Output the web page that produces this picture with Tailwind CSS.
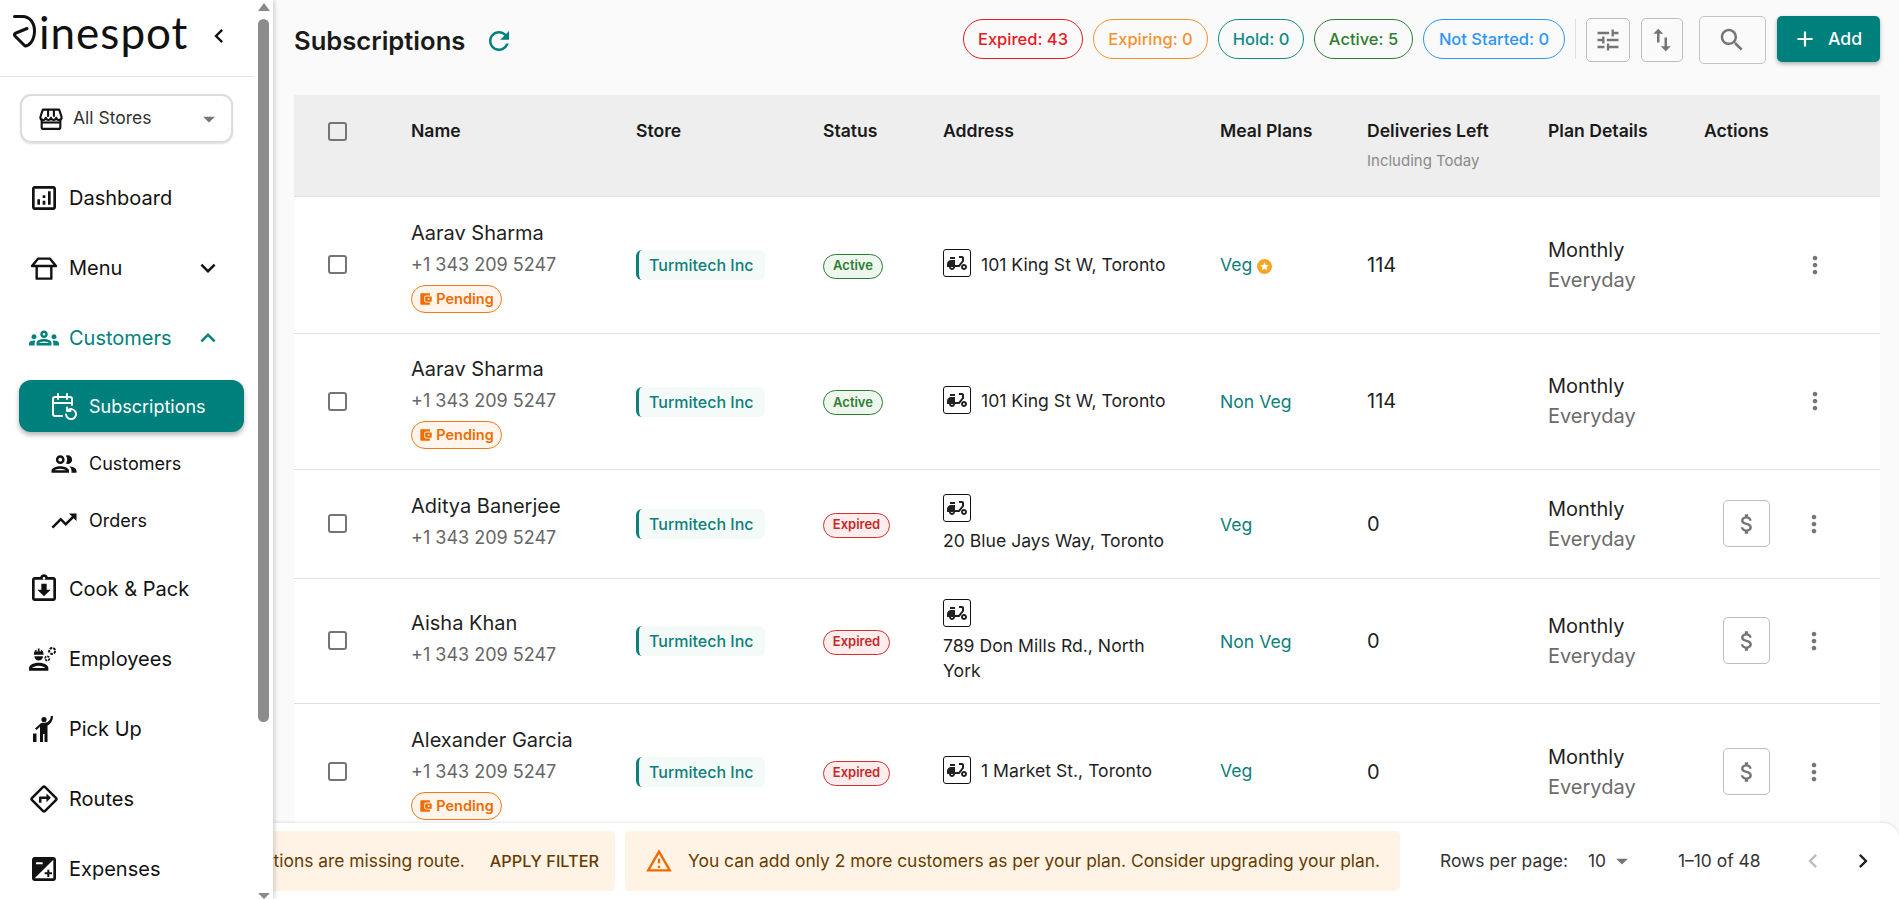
<!DOCTYPE html>
<html lang="en">
<head>
    <meta charset="UTF-8">
    <title>Subscriptions</title>
    <script src="https://cdn.jsdelivr.net/npm/@tailwindcss/browser@4"></script>
</head>
<body class="bg-[#fafafa] font-['Inter',sans-serif] text-[#1a1a1a] overflow-hidden">
    <!-- shared icons -->
    <svg class="hidden">
        <symbol id="moped" viewBox="0 0 24 24"><path d="M19 7c0-1.1-.9-2-2-2h-3v2h3v2.65L13.52 14H10V9H6c-2.21 0-4 1.79-4 4v3h2c0 1.66 1.34 3 3 3s3-1.34 3-3h4.48L19 10.35V7zM7 17c-.55 0-1-.45-1-1h2c0 .55-.45 1-1 1z"/><path d="M5 6h5v2H5zm14 7c-1.66 0-3 1.34-3 3s1.34 3 3 3 3-1.34 3-3-1.34-3-3-3zm0 4c-.55 0-1-.45-1-1s.45-1 1-1 1 .45 1 1-.45 1-1 1z"/></symbol>
        <symbol id="kebab" viewBox="0 0 24 24"><path d="M12 8c1.1 0 2-.9 2-2s-.9-2-2-2-2 .9-2 2 .9 2 2 2zm0 2c-1.1 0-2 .9-2 2s.9 2 2 2 2-.9 2-2-.9-2-2-2zm0 6c-1.1 0-2 .9-2 2s.9 2 2 2 2-.9 2-2-.9-2-2-2z"/></symbol>
        <symbol id="dollar" viewBox="0 0 24 24"><path d="M11.8 10.9c-2.27-.59-3-1.2-3-2.15 0-1.09 1.01-1.85 2.7-1.85 1.78 0 2.44.85 2.5 2.1h2.21c-.07-1.72-1.12-3.3-3.21-3.81V3h-3v2.16c-1.94.42-3.5 1.68-3.5 3.61 0 2.31 1.91 3.46 4.7 4.13 2.5.6 3 1.48 3 2.41 0 .69-.49 1.79-2.7 1.79-2.06 0-2.87-.92-2.98-2.1h-2.2c.12 2.19 1.76 3.42 3.68 3.83V21h3v-2.15c1.95-.37 3.5-1.5 3.5-3.55 0-2.84-2.43-3.81-4.7-4.4z"/></symbol>
        <symbol id="wallet" viewBox="0 0 16 16"><path fill-rule="evenodd" d="M2.5 1.5h10v2.5H8a2 2 0 0 0-2 2v4a2 2 0 0 0 2 2h4.500v2.500h-10a1 1 0 0 1-1-1v-11a1 1 0 0 1 1-1zM8.500 5h6v6h-6a1.500 1.500 0 0 1-1.500-1.500v-3A1.500 1.500 0 0 1 8.500 5zm1.500 2v2h2V7z"/></symbol>
    </svg>

    <div class="flex h-screen">
        <!-- Sidebar -->
        <aside class="relative z-10 w-[273px] shrink-0 h-full bg-white overflow-hidden shadow-[1px_0_5px_rgba(0,0,0,0.22)]">
            <div class="flex items-start h-[77px] w-[254px] border-b border-[#e4e4e4] pl-[13px] pt-[15px]">
                <svg class="w-[23px] h-[33px] shrink-0" viewBox="0 0 23 33" fill="none" stroke="#111" stroke-width="3" stroke-linejoin="round" stroke-linecap="round"><path d="M1.500 1.500H9.500C17 1.500 21.500 8 21.500 16C21.500 25 16.500 31 12 31L2 21C1 20 1.500 18.500 3 18L14 13.500"/></svg>
                <span class="ml-[3px] -mt-[5px] font-['Lato'] text-[44px] leading-none text-[#111] tracking-[1px]">inespot</span>
                <svg class="w-[28px] h-[28px] ml-[17px] mt-[7px] shrink-0" viewBox="0 0 24 24" fill="#111"><path d="M15.410 7.410 14 6l-6 6 6 6 1.410-1.410L10.830 12z"/></svg>
            </div>

            <div class="mx-[20px] mt-[17px] w-[213px] h-[49px] border-2 border-[#dcdcdc] rounded-[11px] shadow-[0_1px_2px_rgba(0,0,0,0.12)] flex items-center pl-[15px] pr-[8px]">
                <svg class="w-[28px] h-[28px] shrink-0" viewBox="0 0 24 24" fill="none" stroke="#111" stroke-width="1.800" stroke-linejoin="round"><path d="M4 12v7a1.500 1.500 0 0 0 1.500 1.500h13A1.500 1.500 0 0 0 20 19v-7"/><path d="M5 4h14l2 6a2.200 2.200 0 0 1-4.500 1 2.300 2.300 0 0 1-4.500 0 2.300 2.300 0 0 1-4.500 0A2.200 2.200 0 0 1 3 10zM9.500 4v6M14.500 4v6"/><path d="M4 15h16"/></svg>
                <span class="ml-[8px] text-[17.500px] text-[#333]">All Stores</span>
                <svg class="w-[28px] h-[28px] ml-auto text-[#757575]" viewBox="0 0 24 24" fill="currentColor"><path d="m7 10 5 5 5-5z"/></svg>
            </div>

            <nav class="mt-[20px] pl-[28px] pr-[50px] text-[20px] text-[#111]">
                <a class="flex items-center h-[70px] gap-[9px]">
                    <svg class="w-[32px] h-[32px] shrink-0" viewBox="0 0 24 24" fill="#111"><path d="M19 3H5c-1.100 0-2 .9-2 2v14c0 1.100.9 2 2 2h14c1.100 0 2-.9 2-2V5c0-1.100-.9-2-2-2zm0 16H5V5h14v14z"/><path d="M7 13h2v4H7zm8-6h2v10h-2zm-4 7h2v3h-2zm0-4h2v2h-2z"/></svg>
                    <span>Dashboard</span>
                </a>
                <a class="flex items-center h-[70px] gap-[9px]">
                    <svg class="w-[32px] h-[32px] shrink-0" viewBox="0 0 24 24" fill="none" stroke="#111" stroke-width="1.800" stroke-linejoin="round"><path d="M3 10.500 7.500 5h9l4.500 5.500z"/><path d="M6.500 10.500V20h11v-9.500"/></svg>
                    <span>Menu</span>
                    <svg class="w-[30px] h-[30px] ml-auto" viewBox="0 0 24 24" fill="#111"><path d="M16.590 8.590 12 13.170 7.410 8.590 6 10l6 6 6-6z"/></svg>
                </a>
                <a class="flex items-center h-[70px] gap-[9px] text-[#00807d]">
                    <svg class="w-[30px] h-[30px] shrink-0 ml-[1px] mr-[1px]" viewBox="0 0 24 24" fill="#00807d"><path d="M4,13c1.100,0,2-0.900,2-2c0-1.100-0.900-2-2-2s-2,0.900-2,2C2,12.100,2.900,13,4,13z M5.130,14.100C4.760,14.040,4.390,14,4,14 c-0.990,0-1.930,0.210-2.780,0.580C0.480,14.900,0,15.620,0,16.430V18l4.500,0v-1.610C4.500,15.560,4.730,14.780,5.130,14.100z M20,13c1.100,0,2-0.900,2-2 c0-1.100-0.900-2-2-2s-2,0.900-2,2C18,12.100,18.900,13,20,13z M24,16.430c0-0.810-0.480-1.530-1.220-1.850C21.930,14.210,20.990,14,20,14 c-0.390,0-0.760,0.040-1.130,0.100c0.400,0.680,0.630,1.460,0.630,2.290V18l4.500,0V16.430z M16.240,13.650c-1.170-0.520-2.610-0.900-4.240-0.900 c-1.630,0-3.070,0.390-4.240,0.900C6.680,14.130,6,15.210,6,16.390V18h12v-1.610C18,15.210,17.320,14.130,16.240,13.650z M8.010,16c0.090-0.230,0.130-0.390,0.910-0.690 c0.970-0.380,1.990-0.560,3.080-0.560s2.110,0.180,3.080,0.560c0.770,0.300,0.810,0.460,0.910,0.690H8.010z M12,12c1.660,0,3-1.340,3-3 c0-1.660-1.340-3-3-3S9,7.340,9,9C9,10.660,10.340,12,12,12z M12,8c0.550,0,1,0.450,1,1s-0.450,1-1,1s-1-0.450-1-1S11.450,8,12,8z"/></svg>
                    <span>Customers</span>
                    <svg class="w-[30px] h-[30px] ml-auto" viewBox="0 0 24 24" fill="#00807d"><path d="m12 8-6 6 1.410 1.410L12 10.830l4.590 4.580L18 14z"/></svg>
                </a>
            </nav>

            <div class="ml-[19px] mt-[7px] w-[225px] h-[52px] rounded-[12px] bg-[#00807d] shadow-[0_3px_5px_rgba(0,0,0,0.3)] flex items-center pl-[31px] gap-[11px] text-white text-[18px]">
                <svg class="w-[28px] h-[28px] shrink-0" viewBox="0 0 28 28" fill="none" stroke="#fff" stroke-width="2" stroke-linecap="round" stroke-linejoin="round"><path d="M12 24H5a2 2 0 0 1-2-2V7a2 2 0 0 1 2-2h15a2 2 0 0 1 2 2v6M3 11h19M8 2v5M17 2v5"/><path d="M16 22.500a5 5 0 1 0 1.500-4"/><path d="M17 15.500v3.500h3.500"/></svg>
                <span>Subscriptions</span>
            </div>

            <div class="pl-[49px] text-[18px] text-[#111]">
                <a class="flex items-center h-[57px] mt-[3px] gap-[10px]">
                    <svg class="w-[30px] h-[30px] shrink-0" viewBox="0 0 24 24" fill="#111"><path d="M9 13.750c-2.340 0-7 1.170-7 3.500V19h14v-1.750c0-2.330-4.660-3.500-7-3.500zM4.340 17c.84-.58 2.870-1.250 4.660-1.250s3.820.67 4.660 1.250H4.340zM9 12c1.930 0 3.500-1.570 3.500-3.500S10.930 5 9 5 5.500 6.570 5.500 8.500 7.070 12 9 12zm0-5c.83 0 1.500.67 1.500 1.500S9.830 10 9 10s-1.500-.67-1.500-1.500S8.170 7 9 7zm7.040 6.810c1.160.84 1.960 1.960 1.960 3.440V19h4v-1.750c0-2.020-3.500-3.170-5.960-3.440zM15 12c1.930 0 3.500-1.570 3.500-3.500S16.930 5 15 5c-.54 0-1.040.13-1.500.35.63.89 1 1.980 1 3.150s-.37 2.260-1 3.150c.46.22.96.35 1.500.35z"/></svg>
                    <span>Customers</span>
                </a>
                <a class="flex items-center h-[57px] gap-[10px]">
                    <svg class="w-[30px] h-[30px] shrink-0" viewBox="0 0 24 24" fill="#111"><path d="m16 6 2.290 2.290-4.880 4.880-4-4L2 16.590 3.410 18l6-6 4 4 6.300-6.290L22 12V6z"/></svg>
                    <span>Orders</span>
                </a>
            </div>

            <nav class="pl-[28px] text-[20px] text-[#111] mt-[5px]">
                <a class="flex items-center h-[70px] gap-[9px]">
                    <svg class="w-[32px] h-[32px] shrink-0" viewBox="0 0 24 24" fill="#111"><path d="M19 3h-4.180C14.400 1.840 13.300 1 12 1c-1.300 0-2.400.84-2.820 2H5c-1.100 0-2 .9-2 2v14c0 1.100.9 2 2 2h14c1.100 0 2-.9 2-2V5c0-1.100-.9-2-2-2zm-7 0c.55 0 1 .45 1 1s-.45 1-1 1-1-.45-1-1 .45-1 1-1zm7 16H5V5h14v14zm-7-1.500 5-5h-3V8h-4v4.500H7z"/></svg>
                    <span>Cook &amp; Pack</span>
                </a>
                <a class="flex items-center h-[70px] gap-[9px]">
                    <svg class="w-[30px] h-[30px] shrink-0 mr-[2px]" viewBox="0 0 28 28" fill="#111"><path d="M10 17.500c-3.500 0-9 1.600-9 4.800V25h18v-2.700c0-3.200-5.500-4.800-9-4.800zm-6.300 5c.9-1.300 3.900-2.300 6.300-2.300s5.400 1 6.300 2.300H3.700z"/><path d="M5.500 9.500V10h9v-.5c0-2-1-3.700-2.500-4.400V7h-1.200V4.300h-1.600V7H8V5.100C6.500 5.800 5.500 7.500 5.500 9.500zM6 11.500a4 4 0 0 0 8 0z"/><circle cx="22.500" cy="6.500" r="2.800" fill="none" stroke="#111" stroke-width="1.800" stroke-dasharray="2.500 1"/><circle cx="18" cy="13.500" r="2" fill="none" stroke="#111" stroke-width="1.600" stroke-dasharray="2 .8"/></svg>
                    <span>Employees</span>
                </a>
                <a class="flex items-center h-[70px] gap-[9px]">
                    <svg class="w-[28px] h-[28px] shrink-0 mx-[2px]" viewBox="0 0 28 28" fill="#111"><circle cx="14" cy="4.500" r="2.600"/><path d="M23 1h-2.200c0 4-2.500 6.400-6 6.800h-2.300c-1.300 0-2 .8-2.400 1.200L5 13.500l1.500 1.600 3.500-3.300V27h3v-8h1.500v8h3V10.500c2.800-1.300 5.500-4.500 5.500-9.500z"/><path d="M3 18.500h3.500V27H3z"/></svg>
                    <span>Pick Up</span>
                </a>
                <a class="flex items-center h-[70px] gap-[9px]">
                    <svg class="w-[30px] h-[30px] shrink-0 ml-[1px] mr-[1px]" viewBox="0 0 24 24" fill="#111"><path d="m22.430 10.590-9.010-9.010c-.75-.75-2.070-.76-2.830 0l-9 9c-.78.78-.78 2.040 0 2.820l9 9c.39.39.9.58 1.410.58.51 0 1.020-.19 1.410-.58l8.990-8.990c.79-.76.8-2.020.03-2.820zm-10.420 10.400-9-9 9-9 9 9-9 9zM8 11v4h2v-3h4v2.500l3.500-3.500L14 7.500V10H9c-.55 0-1 .45-1 1z"/></svg>
                    <span>Routes</span>
                </a>
                <a class="flex items-center h-[70px] gap-[9px]">
                    <svg class="w-[32px] h-[32px] shrink-0" viewBox="0 0 24 24" fill="#111"><path d="M19 3H5c-1.100 0-2 .9-2 2v14c0 1.100.9 2 2 2h14c1.100 0 2-.9 2-2V5c0-1.100-.9-2-2-2zM6 7h5v1.500H6V7zm13 12H5L19 5v14zm-4.500-3v2H16v-2h2v-1.500h-2v-2h-1.500v2h-2V16h2z"/></svg>
                    <span>Expenses</span>
                </a>
            </nav>

            <!-- scrollbar -->
            <div class="absolute top-0 right-[4px] bottom-0 w-[11px]">
                <div class="absolute top-[3px] left-0 w-0 h-0 border-x-[6px] border-x-transparent border-b-[8px] border-b-[#8a8a8a]"></div>
                <div class="absolute top-[19px] left-0 w-[11px] h-[703px] rounded-full bg-[#8c8c8c]"></div>
                <div class="absolute bottom-0 left-0 w-0 h-0 border-x-[6px] border-x-transparent border-t-[6px] border-t-[#8a8a8a]"></div>
            </div>
        </aside>

        <!-- Main -->
        <main class="relative flex-1 min-w-0 h-full overflow-hidden pl-[21px] pr-[19px]">
            <header class="flex items-center h-[80px] mb-[15px]">
                <h1 class="text-[25.600px] mt-[2px] font-semibold text-[#1a1a1a]">Subscriptions</h1>
                <svg class="w-[30px] h-[30px] ml-[19px] mt-[1px]" viewBox="0 0 24 24" fill="#00807d"><path d="M17.650 6.350C16.200 4.900 14.210 4 12 4c-4.420 0-7.990 3.580-7.990 8s3.570 8 7.990 8c3.730 0 6.840-2.550 7.730-6h-2.080c-.82 2.330-3.040 4-5.650 4-3.310 0-6-2.690-6-6s2.690-6 6-6c1.660 0 3.140.69 4.220 1.780L13 11h7V4l-2.350 2.350z"/></svg>
                <div class="ml-auto flex items-center text-[16.500px] font-medium">
                    <div class="flex items-center gap-[10px] -mt-[2px]">
                        <span class="flex items-center justify-center w-[120px] h-[40px] rounded-full border border-[#e31b23] text-[#e31b23]">Expired: 43</span>
                        <span class="flex items-center justify-center w-[115px] h-[40px] rounded-full border border-[#f5922f] text-[#f5922f]">Expiring: 0</span>
                        <span class="flex items-center justify-center w-[86px] h-[40px] rounded-full border border-[#0e8a87] text-[#0e8a87]">Hold: 0</span>
                        <span class="flex items-center justify-center w-[99px] h-[40px] rounded-full border border-[#2e7d32] text-[#2e7d32]">Active: 5</span>
                        <span class="flex items-center justify-center w-[142px] h-[40px] rounded-full border border-[#2e96f3] text-[#2e96f3]">Not Started: 0</span>
                    </div>
                    <div class="w-px h-[40px] bg-[#e0e0e0] ml-[10px] mr-[10px] -mt-[2px]"></div>
                    <button class="w-[44px] h-[44px] border border-[#bdbdbd] rounded-[5px] flex items-center justify-center">
                        <svg class="w-[28px] h-[28px]" viewBox="0 0 24 24" fill="#757575"><path d="M3 17v2h6v-2H3zM3 5v2h10V5H3zm10 16v-2h8v-2h-8v-2h-2v6h2zM7 9v2H3v2h4v2h2V9H7zm14 4v-2H11v2h10zm-6-4h2V7h4V5h-4V3h-2v6z"/></svg>
                    </button>
                    <button class="w-[42px] h-[44px] border border-[#bdbdbd] rounded-[5px] flex items-center justify-center ml-[11px]">
                        <svg class="w-[30px] h-[30px]" viewBox="0 0 24 24" fill="#757575"><path d="M16 17.010V10h-2v7.010h-3L15 21l4-3.990h-3zM9 3 5 6.990h3V14h2V6.990h3L9 3z"/></svg>
                    </button>
                    <button class="w-[67px] h-[48px] border border-[#c4c4c4] rounded-[5px] flex items-center justify-center ml-[16px]">
                        <svg class="w-[30px] h-[30px] -ml-[2px]" viewBox="0 0 24 24" fill="#757575"><path d="M15.500 14h-.79l-.28-.27C15.410 12.590 16 11.110 16 9.500 16 5.910 13.090 3 9.500 3S3 5.910 3 9.500 5.910 16 9.500 16c1.610 0 3.090-.59 4.230-1.570l.27.28v.79l5 4.990L20.490 19l-4.990-5zm-6 0C7.010 14 5 11.990 5 9.500S7.010 5 9.500 5 14 7.010 14 9.500 11.990 14 9.500 14z"/></svg>
                    </button>
                    <button class="w-[103px] h-[46px] -mt-[2px] bg-[#00807d] rounded-[5px] shadow-[0_2px_4px_rgba(0,0,0,0.3)] flex items-center justify-center gap-[10px] ml-[11px] text-white text-[17.600px]">
                        <svg class="w-[26px] h-[26px] -ml-[3px]" viewBox="0 0 24 24" fill="#fff"><path d="M19 13h-6v6h-2v-6H5v-2h6V5h2v6h6v2z"/></svg>
                        <span>Add</span>
                    </button>
                </div>
            </header>

            <table class="w-[1586px] table-fixed border-collapse bg-white text-left">
                <colgroup>
                    <col class="w-[117px]"><col class="w-[225px]"><col class="w-[187px]"><col class="w-[120px]"><col class="w-[277px]"><col class="w-[147px]"><col class="w-[181px]"><col class="w-[156px]"><col class="w-[176px]">
                </colgroup>
                <thead>
                    <tr class="h-[101px] bg-[#eeeeee] border-b border-[#e0e0e0] align-top text-[17.600px] font-semibold text-[#1a1a1a]">
                        <th class="pl-[34px] pt-[27px]"><div class="w-[19px] h-[19px] border-2 border-[#757575] rounded-[3px]"></div></th>
                        <th class="pt-[23px] font-semibold">Name</th>
                        <th class="pt-[23px] font-semibold">Store</th>
                        <th class="pt-[23px] font-semibold">Status</th>
                        <th class="pt-[23px] font-semibold">Address</th>
                        <th class="pt-[23px] font-semibold">Meal Plans</th>
                        <th class="pt-[23px] font-semibold">Deliveries Left<div class="mt-[6px] text-[15px] font-normal text-[#8a8a8a]">Including Today</div></th>
                        <th class="pt-[23px] font-semibold">Plan Details</th>
                        <th class="pt-[23px] font-semibold">Actions</th>
                    </tr>
                </thead>
                <tbody class="text-[#1f1f1f]">
                    <tr class="h-[137px] border-b border-[#e0e0e0]">
                        <td class="pl-[34px]"><div class="w-[19px] h-[19px] border-2 border-[#757575] rounded-[3px]"></div></td>
                        <td>
                            <div class="text-[20px] leading-[32px]">Aarav Sharma</div>
                            <div class="text-[18px] leading-[32px] text-[#666]">+1 343 209 5247</div>
                            <div class="mt-[4px] inline-flex items-center justify-center gap-[3px] h-[28px] w-[91px] rounded-full border border-[#f07a1a] bg-[#fff5ec] text-[#ef6c00] text-[14.500px] font-semibold"><svg class="w-[14px] h-[14px] fill-[#ef6c00]"><use href="#wallet"/></svg>Pending</div>
                        </td>
                        <td class="pt-[1px]"><span class="inline-flex items-center h-[30px] w-[129px] pl-[10px] rounded-[6px] border-l-[3px] border-[#0e7f7b] bg-[#f3faf8] text-[#0e7f7b] text-[16px] font-medium">Turmitech Inc</span></td>
                        <td class="pt-[2px]"><span class="inline-flex items-center justify-center h-[25px] w-[60px] rounded-full border border-[#2e7d32] bg-[#edf7ed] text-[#2e7d32] text-[13px] font-semibold">Active</span></td>
                        <td>
                            <div class="flex items-center gap-[10px] text-[17.600px]">
                                <span class="w-[28px] h-[28px] -mt-[2px] border border-[#111] rounded-[3px] flex items-center justify-center shrink-0"><svg class="w-[24px] h-[24px] fill-[#222]"><use href="#moped"/></svg></span>
                                <span class="mt-[1px]">101 King St W, Toronto</span>
                            </div>
                        </td>
                        <td class="pt-[2px] text-[#0e7f7b] text-[17.600px]"><span class="inline-flex items-center gap-[5px]">Veg<svg class="w-[15px] h-[15px] mt-[3px]" viewBox="0 0 16 16"><circle cx="8" cy="8" r="8" fill="#f5a623"/><path d="M8 3.500l1.300 2.900 3.200.3-2.400 2.100.7 3.100L8 10.300l-2.800 1.600.7-3.100L3.500 6.700l3.200-.3z" fill="#fff"/></svg></span></td>
                        <td class="text-[20px]">114</td>
                        <td>
                            <div class="text-[20px] leading-[30px]">Monthly</div>
                            <div class="text-[20px] leading-[30px] text-[#6b6b6b]">Everyday</div>
                        </td>
                        <td class="pl-[97px]"><svg class="w-[28px] h-[28px] fill-[#757575]"><use href="#kebab"/></svg></td>
                    </tr>
                    <tr class="h-[136px] border-b border-[#e0e0e0]">
                        <td class="pl-[34px]"><div class="w-[19px] h-[19px] border-2 border-[#757575] rounded-[3px]"></div></td>
                        <td>
                            <div class="text-[20px] leading-[32px]">Aarav Sharma</div>
                            <div class="text-[18px] leading-[32px] text-[#666]">+1 343 209 5247</div>
                            <div class="mt-[4px] inline-flex items-center justify-center gap-[3px] h-[28px] w-[91px] rounded-full border border-[#f07a1a] bg-[#fff5ec] text-[#ef6c00] text-[14.500px] font-semibold"><svg class="w-[14px] h-[14px] fill-[#ef6c00]"><use href="#wallet"/></svg>Pending</div>
                        </td>
                        <td class="pt-[1px]"><span class="inline-flex items-center h-[30px] w-[129px] pl-[10px] rounded-[6px] border-l-[3px] border-[#0e7f7b] bg-[#f3faf8] text-[#0e7f7b] text-[16px] font-medium">Turmitech Inc</span></td>
                        <td class="pt-[2px]"><span class="inline-flex items-center justify-center h-[25px] w-[60px] rounded-full border border-[#2e7d32] bg-[#edf7ed] text-[#2e7d32] text-[13px] font-semibold">Active</span></td>
                        <td>
                            <div class="flex items-center gap-[10px] text-[17.600px]">
                                <span class="w-[28px] h-[28px] -mt-[2px] border border-[#111] rounded-[3px] flex items-center justify-center shrink-0"><svg class="w-[24px] h-[24px] fill-[#222]"><use href="#moped"/></svg></span>
                                <span class="mt-[1px]">101 King St W, Toronto</span>
                            </div>
                        </td>
                        <td class="pt-[2px] text-[#0e7f7b] text-[17.600px]">Non Veg</td>
                        <td class="text-[20px]">114</td>
                        <td>
                            <div class="text-[20px] leading-[30px]">Monthly</div>
                            <div class="text-[20px] leading-[30px] text-[#6b6b6b]">Everyday</div>
                        </td>
                        <td class="pl-[97px]"><svg class="w-[28px] h-[28px] fill-[#757575]"><use href="#kebab"/></svg></td>
                    </tr>
                    <tr class="h-[109px] border-b border-[#e0e0e0]">
                        <td class="pl-[34px]"><div class="w-[19px] h-[19px] border-2 border-[#757575] rounded-[3px]"></div></td>
                        <td class="pb-[4px]">
                            <div class="text-[20px] leading-[32px]">Aditya Banerjee</div>
                            <div class="text-[18px] leading-[32px] text-[#666]">+1 343 209 5247</div>
                        </td>
                        <td class="pt-[1px]"><span class="inline-flex items-center h-[30px] w-[129px] pl-[10px] rounded-[6px] border-l-[3px] border-[#0e7f7b] bg-[#f3faf8] text-[#0e7f7b] text-[16px] font-medium">Turmitech Inc</span></td>
                        <td class="pt-[2px]"><span class="inline-flex items-center justify-center h-[25px] w-[67px] rounded-full border border-[#d32f2f] bg-[#fdeded] text-[#c62828] text-[13px] font-semibold">Expired</span></td>
                        <td class="text-[17.600px]">
                            <span class="w-[28px] h-[28px] border border-[#111] rounded-[3px] flex items-center justify-center"><svg class="w-[24px] h-[24px] fill-[#222]"><use href="#moped"/></svg></span>
                            <div class="mt-[6px] leading-[25px] w-[225px]">20 Blue Jays Way, Toronto</div>
                        </td>
                        <td class="pt-[3px] text-[#0e7f7b] text-[17.600px]">Veg</td>
                        <td class="text-[20px]">0</td>
                        <td>
                            <div class="text-[20px] leading-[30px]">Monthly</div>
                            <div class="text-[20px] leading-[30px] text-[#6b6b6b]">Everyday</div>
                        </td>
                        <td>
                            <div class="flex items-center gap-[30px] pl-[19px]">
                                <span class="w-[47px] h-[47px] border border-[#bdbdbd] rounded-[5px] flex items-center justify-center"><svg class="w-[26px] h-[26px] fill-[#757575]"><use href="#dollar"/></svg></span>
                                <svg class="w-[28px] h-[28px] fill-[#757575]"><use href="#kebab"/></svg>
                            </div>
                        </td>
                    </tr>
                    <tr class="h-[125px] border-b border-[#e0e0e0]">
                        <td class="pl-[34px]"><div class="w-[19px] h-[19px] border-2 border-[#757575] rounded-[3px]"></div></td>
                        <td class="pb-[4px]">
                            <div class="text-[20px] leading-[32px]">Aisha Khan</div>
                            <div class="text-[18px] leading-[32px] text-[#666]">+1 343 209 5247</div>
                        </td>
                        <td class="pt-[1px]"><span class="inline-flex items-center h-[30px] w-[129px] pl-[10px] rounded-[6px] border-l-[3px] border-[#0e7f7b] bg-[#f3faf8] text-[#0e7f7b] text-[16px] font-medium">Turmitech Inc</span></td>
                        <td class="pt-[2px]"><span class="inline-flex items-center justify-center h-[25px] w-[67px] rounded-full border border-[#d32f2f] bg-[#fdeded] text-[#c62828] text-[13px] font-semibold">Expired</span></td>
                        <td class="text-[17.600px]">
                            <span class="w-[28px] h-[28px] border border-[#111] rounded-[3px] flex items-center justify-center"><svg class="w-[24px] h-[24px] fill-[#222]"><use href="#moped"/></svg></span>
                            <div class="mt-[6px] leading-[25px] w-[225px]">789 Don Mills Rd., North York</div>
                        </td>
                        <td class="pt-[3px] text-[#0e7f7b] text-[17.600px]">Non Veg</td>
                        <td class="text-[20px]">0</td>
                        <td>
                            <div class="text-[20px] leading-[30px]">Monthly</div>
                            <div class="text-[20px] leading-[30px] text-[#6b6b6b]">Everyday</div>
                        </td>
                        <td>
                            <div class="flex items-center gap-[30px] pl-[19px]">
                                <span class="w-[47px] h-[47px] border border-[#bdbdbd] rounded-[5px] flex items-center justify-center"><svg class="w-[26px] h-[26px] fill-[#757575]"><use href="#dollar"/></svg></span>
                                <svg class="w-[28px] h-[28px] fill-[#757575]"><use href="#kebab"/></svg>
                            </div>
                        </td>
                    </tr>
                    <tr class="h-[137px] border-b border-[#e0e0e0]">
                        <td class="pl-[34px]"><div class="w-[19px] h-[19px] border-2 border-[#757575] rounded-[3px]"></div></td>
                        <td>
                            <div class="text-[20px] leading-[32px]">Alexander Garcia</div>
                            <div class="text-[18px] leading-[32px] text-[#666]">+1 343 209 5247</div>
                            <div class="mt-[4px] inline-flex items-center justify-center gap-[3px] h-[28px] w-[91px] rounded-full border border-[#f07a1a] bg-[#fff5ec] text-[#ef6c00] text-[14.500px] font-semibold"><svg class="w-[14px] h-[14px] fill-[#ef6c00]"><use href="#wallet"/></svg>Pending</div>
                        </td>
                        <td class="pt-[1px]"><span class="inline-flex items-center h-[30px] w-[129px] pl-[10px] rounded-[6px] border-l-[3px] border-[#0e7f7b] bg-[#f3faf8] text-[#0e7f7b] text-[16px] font-medium">Turmitech Inc</span></td>
                        <td class="pt-[2px]"><span class="inline-flex items-center justify-center h-[25px] w-[67px] rounded-full border border-[#d32f2f] bg-[#fdeded] text-[#c62828] text-[13px] font-semibold">Expired</span></td>
                        <td>
                            <div class="flex items-center gap-[10px] text-[17.600px]">
                                <span class="w-[28px] h-[28px] -mt-[2px] border border-[#111] rounded-[3px] flex items-center justify-center shrink-0"><svg class="w-[24px] h-[24px] fill-[#222]"><use href="#moped"/></svg></span>
                                <span>1 Market St., Toronto</span>
                            </div>
                        </td>
                        <td class="text-[#0e7f7b] text-[17.600px]">Veg</td>
                        <td class="text-[20px]">0</td>
                        <td>
                            <div class="text-[20px] leading-[30px]">Monthly</div>
                            <div class="text-[20px] leading-[30px] text-[#6b6b6b]">Everyday</div>
                        </td>
                        <td>
                            <div class="flex items-center gap-[30px] pl-[19px]">
                                <span class="w-[47px] h-[47px] border border-[#bdbdbd] rounded-[5px] flex items-center justify-center"><svg class="w-[26px] h-[26px] fill-[#757575]"><use href="#dollar"/></svg></span>
                                <svg class="w-[28px] h-[28px] fill-[#757575]"><use href="#kebab"/></svg>
                            </div>
                        </td>
                    </tr>
                </tbody>
            </table>

            <!-- Footer bar floats over the table -->
            <footer class="absolute left-0 right-0 bottom-0 h-[76px] bg-white rounded-tr-[16px] shadow-[0_-1px_3px_rgba(0,0,0,0.1)] flex items-center justify-end pr-[24px] text-[17.400px] whitespace-nowrap">
                <div class="shrink-0 flex items-center h-[60px] rounded-[5px] bg-[#fff3e5] text-[#663c00] pl-[16px] pr-[16px] gap-[25px]">
                    <span>5 subscriptions are missing route.</span>
                    <span class="text-[16.300px] font-medium">APPLY FILTER</span>
                </div>
                <div class="shrink-0 flex items-center h-[60px] w-[775px] ml-[10px] rounded-[5px] bg-[#fff3e5] text-[#663c00] pl-[20px] gap-[15px]">
                    <svg class="w-[28px] h-[28px] shrink-0" viewBox="0 0 24 24" fill="#ed6c02"><path d="M1 21h22L12 2 1 21zm3.470-2L12 5.990 19.530 19H4.470zM11 16h2v2h-2zm0-6h2v4h-2z"/></svg>
                    <span>You can add only 2 more customers as per your plan. Consider upgrading your plan.</span>
                </div>
                <div class="shrink-0 flex items-center w-[475px] pl-[40px] text-[#333]">
                    <span>Rows per page:</span>
                    <span class="ml-[20px]">10</span>
                    <svg class="w-[28px] h-[28px] ml-[2px] shrink-0 text-[#757575]" viewBox="0 0 24 24" fill="currentColor"><path d="m7 10 5 5 5-5z"/></svg>
                    <span class="ml-[42px]">1–10 of 48</span>
                    <svg class="w-[28px] h-[28px] ml-[39px] shrink-0" viewBox="0 0 24 24" fill="#bdbdbd"><path d="M15.410 7.410 14 6l-6 6 6 6 1.410-1.410L10.830 12z"/></svg>
                    <svg class="w-[28px] h-[28px] ml-[22px] shrink-0" viewBox="0 0 24 24" fill="#222"><path d="M10 6 8.590 7.410 13.170 12l-4.580 4.590L10 18l6-6z"/></svg>
                </div>
            </footer>
        </main>
    </div>
</body>
</html>
